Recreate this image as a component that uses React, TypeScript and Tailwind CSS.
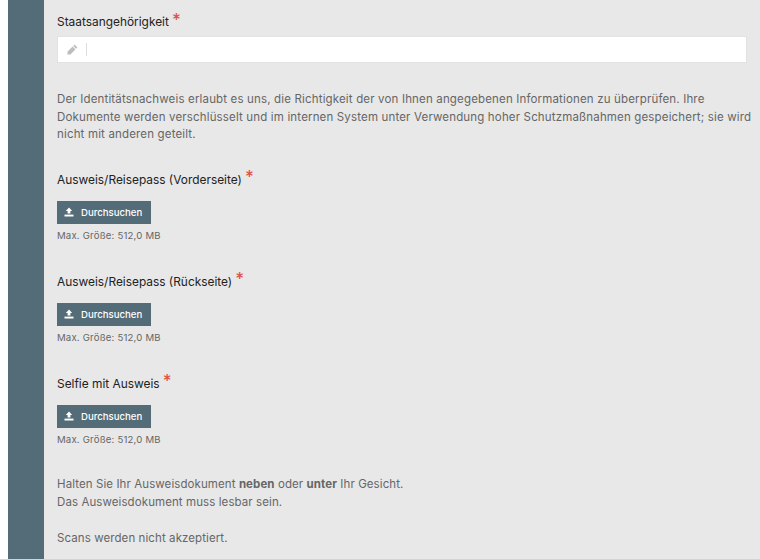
function Label({ text }: { text: string }) {
  return (
    <div className="h-[20px] flex items-center text-[11.9px] text-[#222]">
      <span>{text}</span>
      <span className="ml-[3px] text-[17px] leading-none font-medium text-[#e0524f] relative -top-[2px]">*</span>
    </div>
  )
}

function PencilIcon() {
  return (
    <svg width="11" height="11" viewBox="0 0 11 11" fill="#bdbdbd">
      <path d="M7.6 0.6 L10.4 3.4 L9.1 4.7 L6.3 1.9 Z" />
      <path d="M5.6 2.6 L8.4 5.4 L3.4 10.4 L0.4 10.6 L0.6 7.6 Z" />
    </svg>
  )
}

function UploadIcon() {
  return (
    <svg width="10" height="10" viewBox="0 0 10 10" fill="white">
      <path d="M5 0.5 L8.2 4 H6.4 V6.6 H3.6 V4 H1.8 Z" />
      <rect x="0.5" y="7.6" width="9" height="1.9" />
    </svg>
  )
}

function Upload({ label }: { label: string }) {
  return (
    <div>
      <Label text={label} />
      <button className="mt-[11px] w-[94px] h-[23px] bg-[#546c78] text-white flex items-center pl-[7px] gap-[7px] text-[9.6px] font-medium">
        <UploadIcon />
        <span className="relative top-[1px]">Durchsuchen</span>
      </button>
      <div className="mt-[5px] h-[14px] leading-[14px] text-[9.6px] tracking-[0.02em] text-[#666]">Max. Größe: 512,0 MB</div>
    </div>
  )
}

export default function App() {
  return (
    <div className="h-[559px] w-[760px] overflow-hidden bg-white flex font-['Inter','Noto_Sans',sans-serif]">
      <div className="w-[8px] shrink-0" />
      <div className="w-[36px] shrink-0 bg-[#546c78]" />
      <div className="flex-1 bg-[#e8e8e8] pl-[13px] pt-[12px]">
        <Label text="Staatsangehörigkeit" />
        <div className="mt-[4px] w-[690px] h-[27px] bg-white border border-[#e2e2e2] flex items-center pl-[9px]">
          <PencilIcon />
          <div className="ml-[8px] w-px h-[13px] bg-[#ddd]" />
        </div>
        <p className="mt-[28px] w-[700px] text-[11.5px] leading-[17.6px] tracking-[0.16px] text-[#666]">
          Der Identitätsnachweis erlaubt es uns, die Richtigkeit der von Ihnen angegebenen Informationen zu überprüfen. Ihre Dokumente werden verschlüsselt und im internen System unter Verwendung hoher Schutzmaßnahmen gespeichert; sie wird nicht mit anderen geteilt.
        </p>
        <div className="mt-[26px] flex flex-col gap-[29px]">
          <Upload label="Ausweis/Reisepass (Vorderseite)" />
          <Upload label="Ausweis/Reisepass (Rückseite)" />
          <Upload label="Selfie mit Ausweis" />
        </div>
        <div className="mt-[28px] text-[11.5px] leading-[18px] tracking-[0.09px] text-[#666]">
          <p>
            Halten Sie Ihr Ausweisdokument <b>neben</b> oder <b>unter</b> Ihr Gesicht.
          </p>
          <p>Das Ausweisdokument muss lesbar sein.</p>
          <p className="mt-[18px]">Scans werden nicht akzeptiert.</p>
        </div>
      </div>
    </div>
  )
}
